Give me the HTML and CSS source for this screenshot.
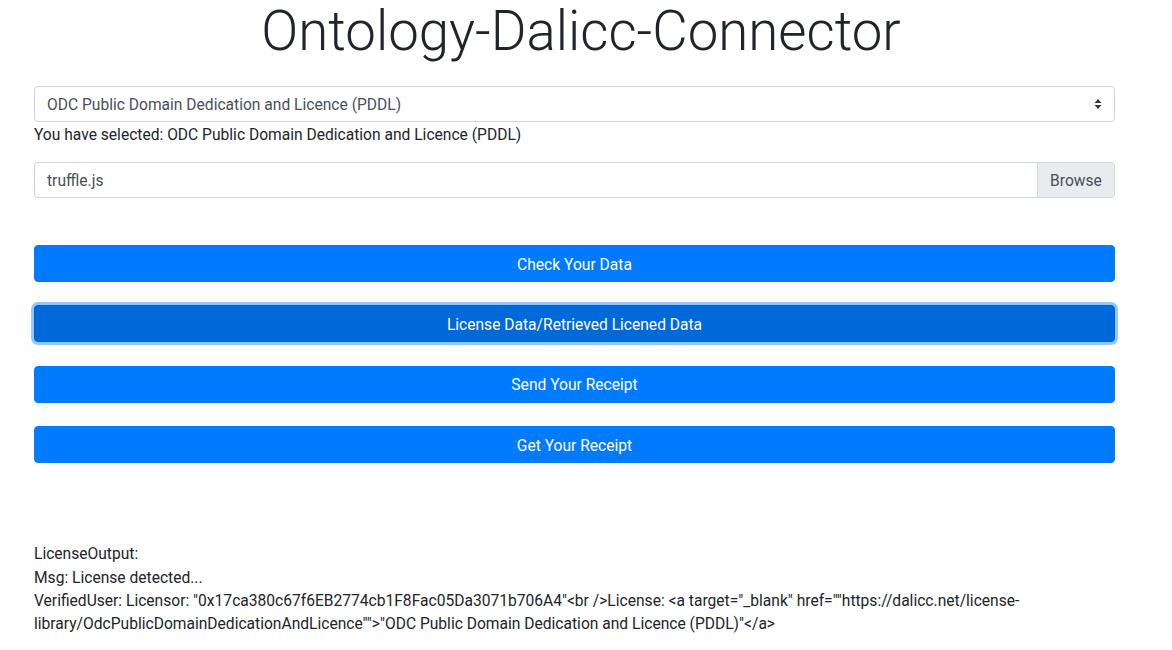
FILE: index.html
```html
<!DOCTYPE html>
<html>
<head>
<meta charset="utf-8">
<title>Ontology-Dalicc-Connector</title>
<link rel="stylesheet" href="styles.css">
</head>
<body>
<div class="page">
  <h1 class="title">Ontology-Dalicc-Connector</h1>
  <div class="container">
    <div class="select">
      <span>ODC Public Domain Dedication and Licence (PDDL)</span>
      <svg class="caret" width="8" height="10" viewBox="0 0 8 10"><path d="M4 0 L7.5 4 H0.5 Z M4 10 L7.5 6 H0.5 Z" fill="#343a40"/></svg>
    </div>
    <p class="selected">You have selected: ODC Public Domain Dedication and Licence (PDDL)</p>
    <div class="file">
      <span class="file-name">truffle.js</span>
      <span class="browse">Browse</span>
    </div>
    <div class="buttons">
      <button class="btn">Check Your Data</button>
      <button class="btn focus">License Data/Retrieved Licened Data</button>
      <button class="btn">Send Your Receipt</button>
      <button class="btn">Get Your Receipt</button>
    </div>
    <div class="output">
      <div>LicenseOutput:</div>
      <div>Msg: License detected...</div>
      <div>VerifiedUser: Licensor: "0x17ca380c67f6EB2774cb1F8Fac05Da3071b706A4"&lt;br /&gt;License: &lt;a target="_blank" href=""https://dalicc.net/license-library/OdcPublicDomainDedicationAndLicence""&gt;"ODC Public Domain Dedication and Licence (PDDL)"&lt;/a&gt;</div>
    </div>
  </div>
</div>
</body>
</html>
```

FILE: styles.css
```css
html, body {
  margin: 0;
  padding: 0;
  background: #fff;
}
body {
  font-family: Roboto, "Liberation Sans", sans-serif;
  font-size: 15.6px;
  color: #212529;
}
.page {
  width: 1162px;
}
.title {
  margin: 0 0 20px 0;
  height: 66px;
  line-height: 62px;
  font-size: 54.6px;
  font-weight: 300;
  text-align: center;
  color: #212529;
}
.container {
  margin-left: 34px;
  width: 1081px;
}
.select {
  box-sizing: border-box;
  height: 36px;
  border: 1px solid #ced4da;
  border-radius: 4px;
  padding: 2px 12px 0;
  display: flex;
  align-items: center;
  justify-content: space-between;
  color: #495057;
}
.caret {
  margin-top: -2px;
}
.selected {
  margin: 0;
  padding-top: 1px;
  line-height: 24px;
}
.file {
  box-sizing: border-box;
  margin-top: 15px;
  height: 36px;
  border: 1px solid #ced4da;
  border-radius: 4px;
  display: flex;
  align-items: stretch;
  color: #495057;
  overflow: hidden;
}
.file-name {
  flex: 1;
  display: flex;
  align-items: center;
  padding: 2px 0 0 12px;
}
.browse {
  width: 76px;
  display: flex;
  align-items: center;
  justify-content: center;
  padding-top: 2px;
  background: #e9ecef;
  border-left: 1px solid #ced4da;
}
.buttons {
  margin-top: 47px;
  display: flex;
  flex-direction: column;
  gap: 23.4px;
}
.btn {
  box-sizing: border-box;
  height: 37px;
  width: 100%;
  border: 1px solid #007bff;
  border-radius: 4px;
  background: #007bff;
  color: #fff;
  font-family: Roboto, "Liberation Sans", sans-serif;
  font-size: 15.6px;
  padding: 2px 0 0;
}
.btn.focus {
  background: #0069d9;
  border-color: #0062cc;
  box-shadow: 0 0 0 3px rgba(38, 143, 255, 0.5);
}
.output {
  margin-top: 80px;
  line-height: 23.4px;
}
```
